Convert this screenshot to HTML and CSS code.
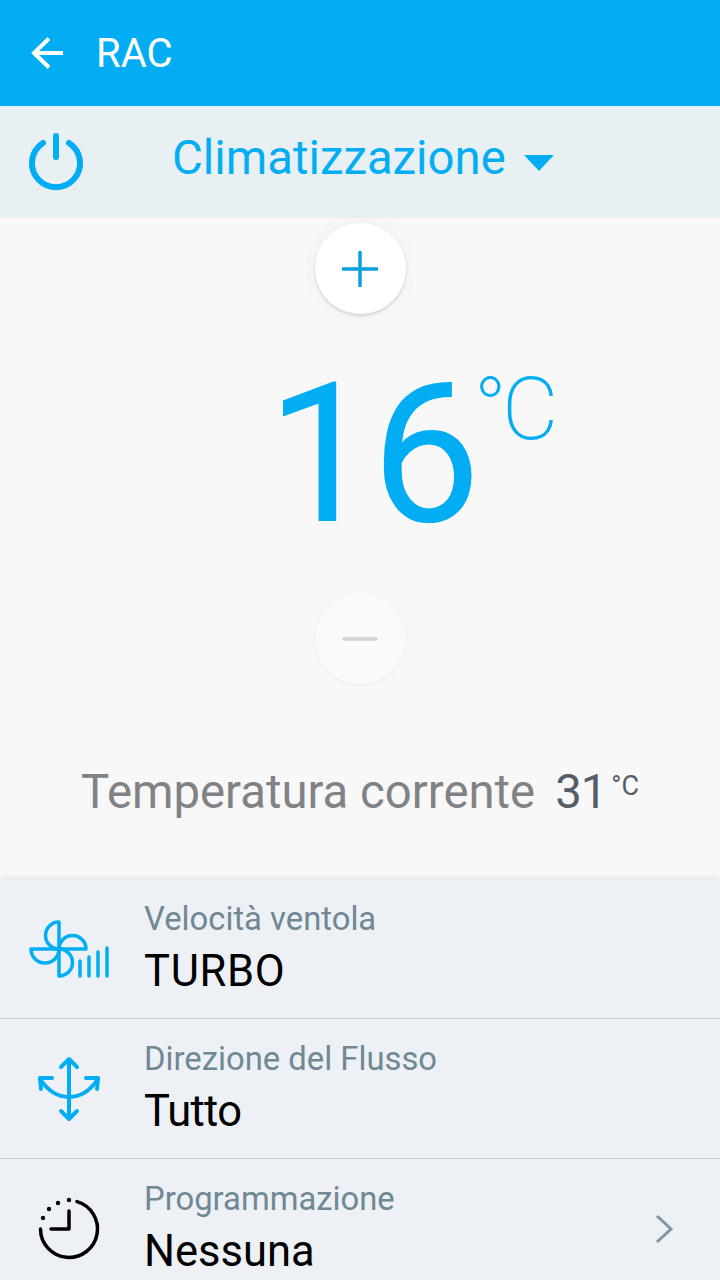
FILE: index.html
```html
<!DOCTYPE html>
<html lang="en">
<head>
  <meta charset="UTF-8">
  <meta name="viewport" content="width=device-width, initial-scale=1.0">
  <title>RAC</title>
  <link rel="stylesheet" href="styles.css">
</head>
<body>
  <div class="screen">
    <header class="topbar">
      <svg class="back" width="36" height="36" viewBox="0 0 36 36"><path d="M34 18H4M20 3.500L5 18L20 32.500" fill="none" stroke="#fff" stroke-width="4"/></svg>
      <span class="title">RAC</span>
    </header>

    <div class="modebar">
      <svg class="power" width="54" height="58" viewBox="0 0 54 58"><path d="M14 10A24 24 0 1 0 40 10" fill="none" stroke="#02adf3" stroke-width="6" stroke-linecap="round"/><path d="M27 3V24" fill="none" stroke="#02adf3" stroke-width="6" stroke-linecap="round"/></svg>
      <div class="mode">
        <span>Climatizzazione</span>
        <i class="caret"></i>
      </div>
    </div>

    <main class="control">
      <button class="round up">
        <svg width="36" height="36" viewBox="0 0 36 36"><path d="M1 18H35M18 1V35" stroke="#0a9fe0" stroke-width="3.500" stroke-linecap="round"/></svg>
      </button>
      <div class="setpoint">
        <span class="big">16</span>
        <span class="unit">°C</span>
      </div>
      <button class="round down">
        <svg width="36" height="6" viewBox="0 0 36 6"><path d="M2 3H34" stroke="#d2d2d2" stroke-width="3.500" stroke-linecap="round"/></svg>
      </button>
      <div class="current">
        <span class="current-label">Temperatura corrente</span>
        <span class="current-value">31</span>
        <span class="current-unit">°C</span>
      </div>
    </main>

    <section class="list">
      <div class="row">
        <div class="row-icon">
          <svg width="82" height="58" viewBox="0 0 82 58" fill="none" stroke="#02adf3" stroke-width="3.500" stroke-linecap="round" stroke-linejoin="round">
            <path d="M31 2A13.500 13.500 0 0 0 31 29Z"/>
            <path d="M31 29H58A13.500 13.500 0 0 0 31 29Z"/>
            <path d="M31 29V56A13.500 13.500 0 0 0 31 29Z"/>
            <path d="M31 29H3A14 14 0 0 0 31 29Z"/>
            <path d="M52 41V56M61 37V56M70 32V56M79 28V56"/>
          </svg>
        </div>
        <div class="row-text">
          <span class="row-label">Velocità ventola</span>
          <span class="row-value wide">TURBO</span>
        </div>
      </div>
      <div class="row">
        <div class="row-icon">
          <svg width="66" height="66" viewBox="0 0 66 66" fill="none" stroke="#02adf3" stroke-width="4" stroke-linecap="round" stroke-linejoin="round">
            <path d="M33 3V63M25 11L33 3L41 11M25 55L33 63L41 55"/>
            <path d="M4 23C12 35 22 41 33 41C44 41 54 35 62 23"/>
            <path d="M5 33L4 22H16M61 33L62 22H50"/>
          </svg>
        </div>
        <div class="row-text">
          <span class="row-label">Direzione del Flusso</span>
          <span class="row-value tight">Tutto</span>
        </div>
      </div>
      <div class="row">
        <div class="row-icon">
          <svg width="66" height="66" viewBox="0 0 66 66" fill="none" stroke="#000" stroke-width="3.500" stroke-linecap="round" stroke-linejoin="round">
            <path d="M41 5.600A28.500 28.500 0 1 1 4.500 33"/>
            <path d="M33 15V33H15"/>
            <circle cx="33" cy="4" r="2.200" fill="#000" stroke="none"/>
            <circle cx="22" cy="7" r="2.200" fill="#000" stroke="none"/>
            <circle cx="13" cy="13" r="2.200" fill="#000" stroke="none"/>
            <circle cx="7" cy="22" r="2.200" fill="#000" stroke="none"/>
          </svg>
        </div>
        <div class="row-text">
          <span class="row-label">Programmazione</span>
          <span class="row-value">Nessuna</span>
        </div>
        <svg class="chevron" width="18" height="30" viewBox="0 0 18 30"><path d="M2 2L16 15L2 28" fill="none" stroke="#7f98a3" stroke-width="3"/></svg>
      </div>
    </section>
  </div>
</body>
</html>
```

FILE: styles.css
```css
body {
  margin: 0;
  font-family: Roboto, sans-serif;
  background: #f8f8f8;
}

.screen {
  width: 720px;
  height: 1280px;
  overflow: hidden;
}

.topbar {
  height: 106px;
  background: #02adf3;
  display: flex;
  align-items: center;
  padding-left: 29px;
  box-sizing: border-box;
}

.back {
  margin-right: 31px;
}

.title {
  color: #fff;
  font-size: 40px;
}

.modebar {
  height: 112px;
  background: #e8f0f4;
  display: flex;
  align-items: center;
  padding-left: 29px;
  box-sizing: border-box;
}

.mode {
  display: flex;
  align-items: center;
  margin-left: 89px;
  margin-bottom: 8px;
  color: #02adf3;
  font-size: 47.300px;
}

.caret {
  width: 0;
  height: 0;
  margin-left: 18px;
  margin-top: 10px;
  border-left: 15px solid transparent;
  border-right: 15px solid transparent;
  border-top: 16px solid #02adf3;
}

.control {
  height: 661px;
  background: #f8f8f8;
  display: flex;
  flex-direction: column;
  align-items: center;
  padding-top: 5px;
  box-sizing: border-box;
}

.round {
  width: 91px;
  height: 91px;
  padding: 0;
  border: none;
  border-radius: 50%;
  display: flex;
  align-items: center;
  justify-content: center;
  flex: none;
}

.up {
  background: #fff;
  box-shadow: 0 2px 3px rgba(0, 0, 0, 0.12), 0 0 0 10px rgba(0, 0, 0, 0.006), 0 0 6px rgba(0, 0, 0, 0.04);
}

.down {
  background: #fafafa;
  box-shadow: 0 1px 4px rgba(0, 0, 0, 0.06);
}

.setpoint {
  height: 279px;
  display: flex;
  align-items: flex-start;
  color: #02adf3;
  margin-left: 100px;
}

.big {
  font-size: 195px;
  line-height: 229px;
  margin-top: 26px;
  letter-spacing: -5px;
}

.unit {
  font-size: 87px;
  font-weight: 200;
  line-height: 102px;
  margin-top: 44px;
  margin-left: -2px;
  letter-spacing: -5px;
}

.current {
  display: flex;
  align-items: baseline;
  margin-top: 80px;
}

.current-label {
  color: #808285;
  font-size: 47.300px;
}

.current-value {
  color: #555e68;
  font-size: 47.300px;
  margin-left: 20px;
  letter-spacing: -1px;
}

.current-unit {
  color: #555e68;
  font-size: 27px;
  position: relative;
  top: -13px;
  margin-left: 5px;
}

.list {
  background: #edf1f5;
  box-shadow: 0 -2px 5px rgba(0, 0, 0, 0.08);
  position: relative;
}

.row {
  height: 140px;
  box-sizing: border-box;
  display: flex;
  align-items: center;
  border-bottom: 1px solid #c9cdd0;
}

.row-icon {
  width: 138px;
  display: flex;
  justify-content: center;
  flex: none;
}

.row-text {
  display: flex;
  flex-direction: column;
  margin-left: 6px;
}

.row-label {
  color: #6f8894;
  font-size: 32.800px;
  line-height: 38px;
}

.row-value {
  color: #000;
  font-size: 43.500px;
  line-height: 52px;
  margin-top: 8px;
}

.wide {
  letter-spacing: 0.700px;
}

.tight {
  letter-spacing: -0.700px;
}

.chevron {
  margin-left: auto;
  margin-right: 47px;
}
```
